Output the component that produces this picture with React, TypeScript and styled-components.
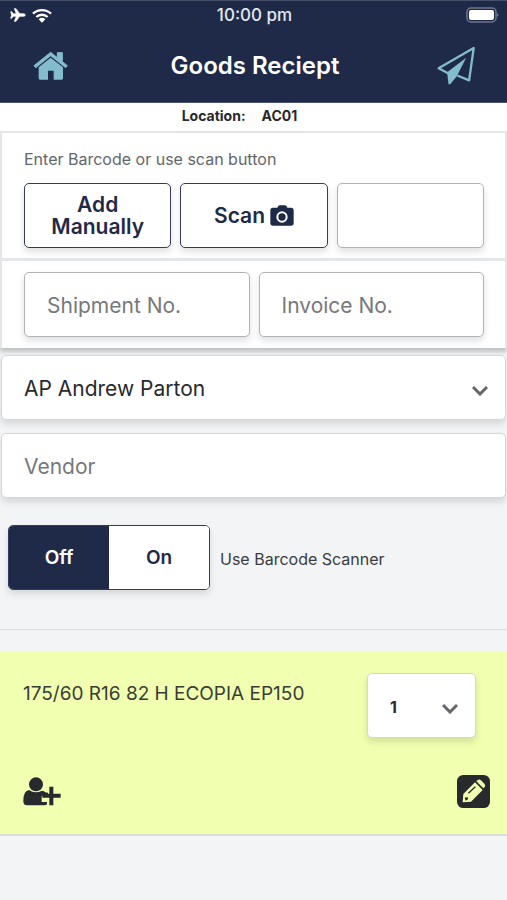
import React, { useState } from "react";
import styled, { createGlobalStyle, css } from "styled-components";

const navy = "#1f2a48";
const sky = "#83bccd";
const ink = "#27292d";

const GlobalStyle = createGlobalStyle`
  *, *::before, *::after { box-sizing: border-box; }
  body {
    margin: 0;
    background: #f2f4f6;
    color: ${ink};
    font-family: Inter, "Liberation Sans", sans-serif;
    font-size: 16px;
  }
  button, input, select { font: inherit; color: inherit; margin: 0; }
  svg { display: block; }
`;

const Header = styled.header`
  background: ${navy};
  color: #fff;
  border-top: 1px solid #46506a;
  border-bottom: 1px solid #4b5474;
`;

const StatusBar = styled.div`
  display: grid;
  grid-template-columns: 1fr auto 1fr;
  align-items: center;
  height: 28px;
  padding: 0 8px 0 10px;
  font-size: 17px;
  font-weight: 500;
  color: #e3e7f0;
`;

const StatusIcons = styled.div<{ $end?: boolean }>`
  display: flex;
  align-items: center;
  gap: 6px;
  justify-content: ${(p) => (p.$end ? "flex-end" : "flex-start")};
`;

const NavBar = styled.nav`
  display: flex;
  align-items: center;
  justify-content: space-between;
  height: 73px;
  padding: 0 32px 0 33px;
`;

const Title = styled.h1`
  margin: 0;
  padding-left: 5px;
  font-size: 24px;
  line-height: 30px;
  font-weight: 600;
`;

const IconLink = styled.a`
  color: ${sky};
`;

const IconButton = styled.button`
  padding: 0;
  border: 0;
  background: none;
  cursor: pointer;
`;

const SendButton = styled(IconButton)`
  color: ${sky};
`;

const Location = styled.p`
  display: flex;
  justify-content: center;
  gap: 16px;
  margin: 0;
  padding: 3px 28px 5px 0;
  background: #fff;
  font-size: 14px;
  line-height: 20px;
  font-weight: 700;
`;

const Panel = styled.section`
  background: #fff;
  border: 2px solid #e4e6e9;
  border-bottom: 0;
  box-shadow: 0 4px 4px rgba(0, 0, 0, 0.2);
`;

const PanelRow = styled.div<{ $divided?: boolean }>`
  padding: ${(p) => (p.$divided ? "11px 21px 11px 22px" : "16px 21px 10px 22px")};
  ${(p) => p.$divided && css`border-top: 3px solid #e4e6e9;`}
`;

const Hint = styled.label`
  display: block;
  margin-bottom: 14px;
  font-size: 16px;
  line-height: 20px;
  color: #63666b;
`;

const Columns = styled.div<{ $count: number }>`
  display: grid;
  grid-template-columns: repeat(${(p) => p.$count}, minmax(0, 1fr));
  gap: 9px;
`;

const control = css`
  height: 65px;
  border-radius: 5px;
  background: #fff;
  box-shadow: 0 4px 7px rgba(0, 0, 0, 0.12);
`;

const ActionButton = styled.button`
  ${control}
  display: flex;
  align-items: center;
  justify-content: center;
  gap: 5px;
  padding: 0 20px;
  border: 1px solid #363a60;
  color: ${navy};
  font-size: 21px;
  line-height: 22px;
  font-weight: 600;
  cursor: pointer;
`;

const TextInput = styled.input<{ $wide?: boolean }>`
  ${control}
  width: 100%;
  min-width: 0;
  padding: 2px 22px 0;
  border: 1px solid ${(p) => (p.$wide ? "#d3d6df" : "#b2b3b5")};
  font-size: 21px;
  &::placeholder { color: #76787b; opacity: 1; }
`;

const Fields = styled.div`
  display: grid;
  gap: 13px;
  margin: 7px 1px 0;
`;

const SelectWrap = styled.div<{ $width?: number }>`
  display: grid;
  align-items: center;
  ${(p) => p.$width && css`width: ${p.$width}px;`}
  > * { grid-area: 1 / 1; }
  > svg { justify-self: end; margin-right: 18px; margin-top: 5px; pointer-events: none; }
`;

const Select = styled.select<{ $strong?: boolean }>`
  ${control}
  appearance: none;
  width: 100%;
  padding: 2px 22px 0;
  border: 1px solid #d3d6df;
  font-size: ${(p) => (p.$strong ? 16 : 21)}px;
  font-weight: ${(p) => (p.$strong ? 700 : 400)};
`;

const ToggleRow = styled.div`
  display: flex;
  align-items: center;
  gap: 10px;
  padding: 27px 8px 39px;
  border-bottom: 1px solid #dcdee0;
`;

const Toggle = styled.div`
  ${control}
  display: grid;
  grid-template-columns: 1fr 1fr;
  width: 202px;
  border: 1px solid #363a60;
  overflow: hidden;
`;

const ToggleOption = styled.button<{ $active: boolean }>`
  padding: 0;
  border: 0;
  background: ${(p) => (p.$active ? navy : "#fff")};
  color: ${(p) => (p.$active ? "#fff" : navy)};
  font-size: 19px;
  font-weight: 600;
  cursor: pointer;
`;

const ToggleLabel = styled.span`
  padding-top: 2px;
  font-size: 16px;
  line-height: 20px;
  color: #3a3c40;
`;

const Item = styled.article`
  margin-top: 22px;
  padding: 21px 17px 26px 23px;
  background: #f0ffb0;
  border-bottom: 2px solid #dadfd4;
`;

const ItemTop = styled.div`
  display: flex;
  justify-content: space-between;
  align-items: flex-start;
  padding-right: 14px;
`;

const ItemName = styled.h2`
  margin: 9px 0 0;
  font-size: 19px;
  line-height: 24px;
  font-weight: 400;
  color: #3a3c36;
`;

const ItemActions = styled.div`
  display: flex;
  justify-content: space-between;
  align-items: center;
  margin-top: 37px;
`;

const Plane = () => (
  <svg width="16" height="14" viewBox="0 0 48 42" fill="#fff" aria-hidden="true">
    <path d="M46 21c0-2-3-4-6-4H29L18 2h-5l6 15h-9L5 11H2l3 10-3 10h3l5-6h9l-6 15h5l11-15h11c3 0 6-2 6-4z" stroke="#fff" strokeWidth="2" />
  </svg>
);

const Wifi = () => (
  <svg width="20" height="15" viewBox="0 0 60 45" aria-hidden="true">
    <g fill="none" stroke="#fff" strokeWidth="7">
      <path d="M3 17a39 39 0 0 1 54 0" />
      <path d="M13 27a25 25 0 0 1 34 0" />
    </g>
    <path d="M20 34a15 15 0 0 1 20 0L30 44z" fill="#fff" />
  </svg>
);

const Battery = () => (
  <svg width="33" height="16" viewBox="0 0 33 16" aria-hidden="true">
    <rect x="1" y="1" width="29" height="14" rx="4" fill="none" stroke="#6f7690" strokeWidth="1.5" />
    <rect x="3" y="3" width="25" height="10" rx="2" fill="#fff" />
    <path d="M31 6c2 1 2 3 0 4z" fill="#6f7690" />
  </svg>
);

const House = () => (
  <svg width="35" height="29" viewBox="0 0 105 87" fill="currentColor" aria-hidden="true">
    <path d="M53 4 3 44l5 6 45-36 45 36 5-6-15-12V5H73v15z" stroke="currentColor" strokeWidth="3" strokeLinejoin="round" />
    <path d="M53 20 17 49v33q0 4 4 4h24V59h17v27h24q4 0 4-4V49z" />
  </svg>
);

const PaperPlane = () => (
  <svg width="38" height="39" viewBox="4 2 114 119" aria-hidden="true">
    <path d="M38 86 8 70 115 8l-14 99-36-15" fill="none" stroke="currentColor" strokeWidth="7" strokeLinejoin="round" />
    <path d="M92 38 34 82l4 36q3 3 6 0l19-23z" fill="currentColor" />
  </svg>
);

const Camera = () => (
  <svg width="24" height="21" viewBox="0 0 72 63" aria-hidden="true">
    <path d="M22 8q2-7 8-7h14q6 0 8 7h11q8 0 8 8v38q0 8-8 8H9q-8 0-8-8V16q0-8 8-8z" fill={navy} />
    <circle cx="36" cy="36" r="14" fill="none" stroke="#fff" strokeWidth="6" />
  </svg>
);

const Chevron = () => (
  <svg width="16" height="11" viewBox="0 0 16 11" fill="none" stroke="#64666b" strokeWidth="3" aria-hidden="true">
    <path d="m1 2 7 7 7-7" />
  </svg>
);

const PersonAdd = () => (
  <svg width="38" height="29" viewBox="0 0 114 87" fill={ink} aria-hidden="true">
    <circle cx="39" cy="22" r="21" />
    <path d="M18 39q18 13 39 2 7 0 10 5l8 1v9H56v19h16v7q-3 3-8 3H12Q1 85 1 73q0-32 17-34z" />
    <path d="M79 29h12v21h22v12H91v23H79V62H58V50h21z" />
  </svg>
);

const PencilSquare = () => (
  <svg width="33" height="33" viewBox="0 0 99 99" aria-hidden="true">
    <rect width="99" height="99" rx="19" fill={ink} />
    <path d="m17 82 2-25 35-35 23 23-35 35zM58 19l4-4q5-4 10 1l10 10q5 5 1 10l-4 4z" fill="#f0ffb0" />
    <path d="m34 55 21-20" stroke={ink} strokeWidth="4" />
    <path d="m23 68 9-2 1 7-7 4z" fill={ink} />
  </svg>
);

export default function App() {
  const [scanner, setScanner] = useState(false);
  return (
    <>
      <GlobalStyle />
      <Header>
        <StatusBar>
          <StatusIcons><Plane /><Wifi /></StatusIcons>
          <span>10:00 pm</span>
          <StatusIcons $end><Battery /></StatusIcons>
        </StatusBar>
        <NavBar>
          <IconLink href="#home" aria-label="Home"><House /></IconLink>
          <Title>Goods Reciept</Title>
          <SendButton type="button" aria-label="Send"><PaperPlane /></SendButton>
        </NavBar>
      </Header>
      <main>
        <Location><span>Location:</span><span>AC01</span></Location>
        <Panel>
          <PanelRow>
            <Hint htmlFor="barcode">Enter Barcode or use scan button</Hint>
            <Columns $count={3}>
              <ActionButton type="button">Add Manually</ActionButton>
              <ActionButton type="button">Scan <Camera /></ActionButton>
              <TextInput id="barcode" type="text" />
            </Columns>
          </PanelRow>
          <PanelRow $divided>
            <Columns $count={2}>
              <TextInput type="text" placeholder="Shipment No." aria-label="Shipment No." />
              <TextInput type="text" placeholder="Invoice No." aria-label="Invoice No." />
            </Columns>
          </PanelRow>
        </Panel>
        <Fields>
          <SelectWrap>
            <Select aria-label="Staff member" defaultValue="AP">
              <option value="AP">AP Andrew Parton</option>
            </Select>
            <Chevron />
          </SelectWrap>
          <TextInput $wide type="text" placeholder="Vendor" aria-label="Vendor" />
        </Fields>
        <ToggleRow>
          <Toggle role="group" aria-labelledby="scanner-label">
            <ToggleOption type="button" $active={!scanner} aria-pressed={!scanner} onClick={() => setScanner(false)}>Off</ToggleOption>
            <ToggleOption type="button" $active={scanner} aria-pressed={scanner} onClick={() => setScanner(true)}>On</ToggleOption>
          </Toggle>
          <ToggleLabel id="scanner-label">Use Barcode Scanner</ToggleLabel>
        </ToggleRow>
        <Item>
          <ItemTop>
            <ItemName>175/60 R16 82 H ECOPIA EP150</ItemName>
            <SelectWrap $width={109}>
              <Select $strong aria-label="Quantity" defaultValue="1">
                <option>1</option>
                <option>2</option>
                <option>3</option>
              </Select>
              <Chevron />
            </SelectWrap>
          </ItemTop>
          <ItemActions>
            <IconButton type="button" aria-label="Assign person"><PersonAdd /></IconButton>
            <IconButton type="button" aria-label="Edit item"><PencilSquare /></IconButton>
          </ItemActions>
        </Item>
      </main>
    </>
  );
}
